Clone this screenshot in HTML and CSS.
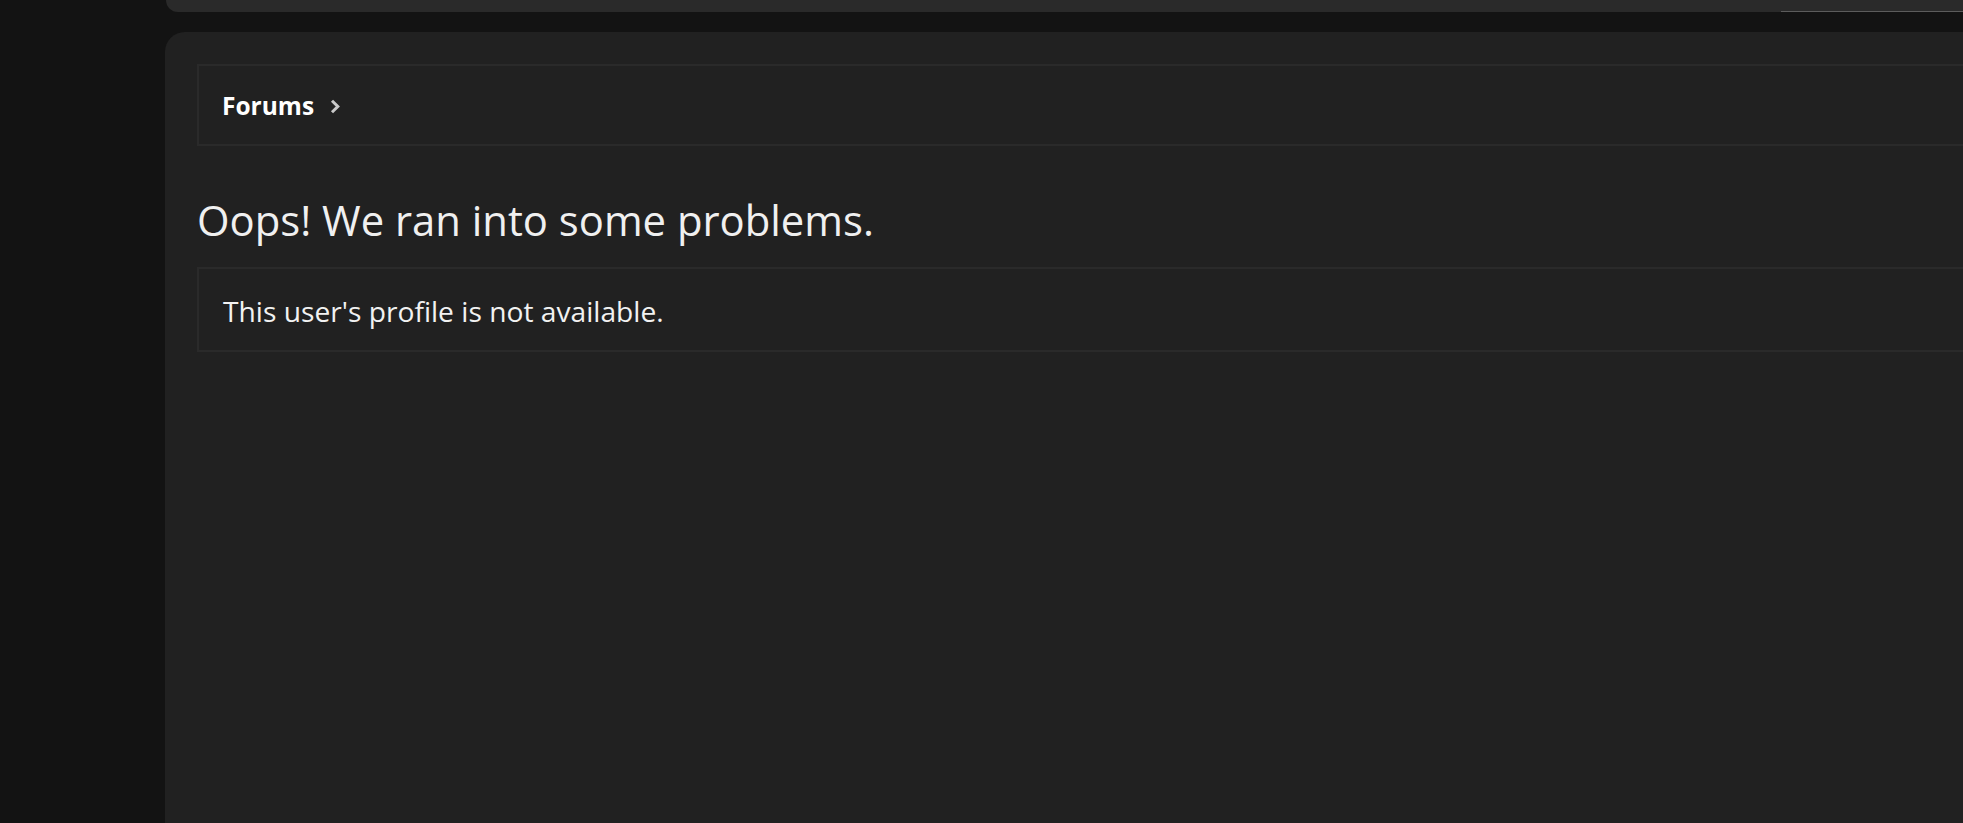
FILE: index.html
```html
<!DOCTYPE html>
<html>
<head>
  <title>Oops! We ran into some problems.</title>
  <link rel="stylesheet" href="styles.css">
</head>
<body>

  <div class="page">
    <div class="top-bar">
      <div class="top-bar-line"></div>
    </div>

    <div class="panel">
      <div class="breadcrumbs">
        <a class="crumb" href="#">Forums</a>
        <svg class="crumb-arrow" width="12" height="15" viewBox="0 0 12 15">
          <path d="M3 1.8 L8.8 7.5 L3 13.2" fill="none" stroke="#c9c9c9" stroke-width="3" stroke-linejoin="miter"/>
        </svg>
      </div>

      <h1>Oops! We ran into some problems.</h1>

      <div class="block-row">This user's profile is not available.</div>
    </div>
  </div>

</body>
</html>
```

FILE: styles.css
```css
html, body {
  margin: 0;
  height: 100%;
}
body {
  font-family: 'Open Sans', 'Noto Sans', sans-serif;
  background: #131313;
  color: #f2f2f2;
  overflow: hidden;
}
.page {
  padding-left: 165px;
}
.top-bar {
  height: 12px;
  margin-left: 1px;
  background: #2a2a2a;
  border-bottom-left-radius: 20px;
  display: flex;
  justify-content: flex-end;
  align-items: flex-end;
}
.top-bar-line {
  width: 182px;
  height: 1px;
  background: #5c5c5c;
}
.panel {
  margin-top: 20px;
  margin-right: -60px;
  height: calc(100vh - 32px);
  background: #212121;
  border-top-left-radius: 20px;
  padding: 32px;
  box-sizing: border-box;
}
.breadcrumbs {
  display: flex;
  align-items: center;
  gap: 15px;
  border: 2px solid #2a2a2a;
  padding: 25px 23px 23px;
}
.crumb {
  font-size: 24.5px;
  font-weight: 700;
  line-height: 30px;
  color: #ffffff;
  text-decoration: none;
}
.crumb-arrow {
  display: block;
}
h1 {
  font-size: 41.8px;
  font-weight: 400;
  line-height: 49px;
  margin: 49px 0 23px;
  color: #f0f0f0;
}
.block-row {
  border: 2px solid #2a2a2a;
  padding: 23px 24px 19px;
  font-size: 28.2px;
  line-height: 39px;
  color: #f2f2f2;
}
```
